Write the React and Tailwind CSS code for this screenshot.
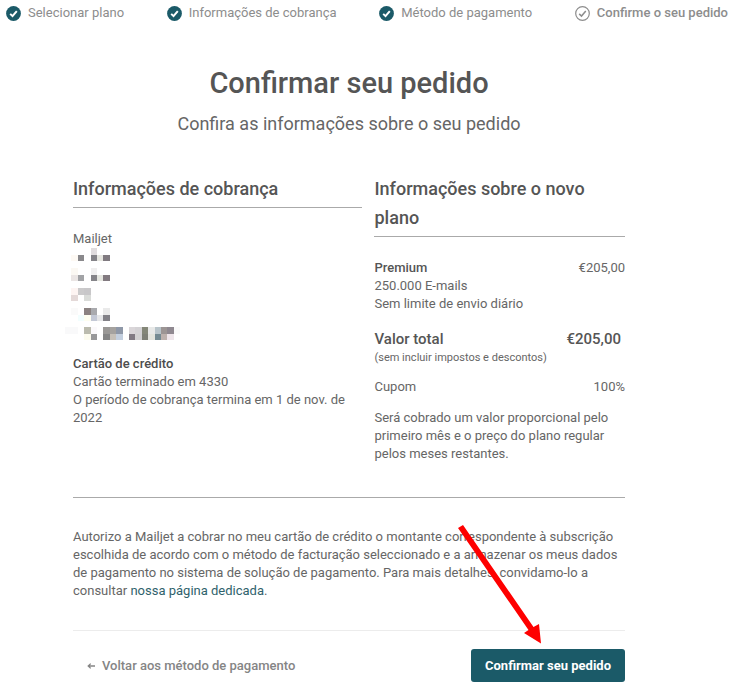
const steps = [
  { label: 'Selecionar plano', done: true },
  { label: 'Informações de cobrança', done: true },
  { label: 'Método de pagamento', done: true },
  { label: 'Confirme o seu pedido', done: false },
];

// [column, row, colour] on a grid of 6.4px squares
const mosaic = [
  { y: 0, cells: [[4, 0, '#e0dcde'], [1, 1, '#fdf9f4'], [2, 1, '#8a898c'], [4, 1, '#848388'], [5, 1, '#e6e6e0'], [6, 1, '#807a80']] },
  { y: 20, cells: [[1, 0, '#fbf8f3'], [4, 0, '#f0efef'], [1, 1, '#eae5e4'], [2, 1, '#a2a3a6'], [4, 1, '#858489'], [5, 1, '#e5e6e0'], [6, 1, '#827a80']] },
  { y: 40, cells: [[1, 0, '#fdf4f2'], [2, 0, '#cbcacb'], [3, 0, '#c8c7c9'], [1, 1, '#e4d9d8'], [3, 1, '#dadcd9']] },
  { y: 60, cells: [[1, 0, '#fafafa'], [3, 0, '#8b8281'], [4, 0, '#a9aaae'], [6, 0, '#eaeaea'], [2, 1, '#f2fefe'], [3, 1, '#fefef0'], [4, 1, '#c4c9d6'], [5, 1, '#e5e6e8'], [6, 1, '#828187']] },
  {
    y: 79,
    cells: [
      [0, 0, '#f9f9fa'], [1, 0, '#f9f9fa'], [3, 0, '#bbbbae'], [4, 0, '#fbf9fb'], [6, 0, '#9a9896'], [7, 0, '#a5a29f'], [8, 0, '#8f98a8'],
      [10, 0, '#dad6d9'], [11, 0, '#d4d2d5'], [12, 0, '#848778'], [13, 0, '#e8e9e8'], [14, 0, '#b8c4ca'], [15, 0, '#9c9594'], [16, 0, '#8f8890'], [17, 0, '#fafafa'],
      [3, 1, '#fcfbee'], [4, 1, '#98989a'], [6, 1, '#858585'], [7, 1, '#c6c0b8'], [8, 1, '#c3cfdf'],
      [10, 1, '#817a83'], [11, 1, '#d2d1d2'], [12, 1, '#7e8076'], [13, 1, '#e3e4dd'], [14, 1, '#748a92'], [15, 1, '#bdb1ad'], [16, 1, '#eee5ea'],
    ],
  },
];

function StepIcon({ done }) {
  return (
    <svg viewBox="0 0 15 15" className="w-[15px] h-[15px] shrink-0" fill="none" aria-hidden="true">
      {done ? (
        <circle cx="7.5" cy="7.5" r="7.4" fill="#1b5a68" />
      ) : (
        <circle cx="7.5" cy="7.5" r="6.8" stroke="#8d8d8d" strokeWidth="1.2" />
      )}
      <path
        d="M4.2 7.9 L6.5 10.1 L10.8 5.1"
        stroke={done ? '#ffffff' : '#8d8d8d'}
        strokeWidth={done ? 2 : 1.5}
      />
    </svg>
  );
}

function HiddenAddress() {
  return (
    <svg viewBox="0 0 116 93" className="w-[116px] h-[93px] -ml-2" shapeRendering="crispEdges" role="img" aria-label="Endereço oculto">
      {mosaic.map((line) =>
        line.cells.map(([col, row, fill]) => (
          <rect key={`${line.y}-${col}-${row}`} x={col * 6.4} y={line.y + row * 6.6} width="6.4" height="6.6" fill={fill} />
        ))
      )}
    </svg>
  );
}

export default function App() {
  return (
    <div className="relative bg-white font-['Roboto',sans-serif] text-[13px] leading-[18px] text-[#666666]">
      <ol className="flex justify-between pl-[6px] pr-[6px] pt-1 text-[#8d8d8d]">
        {steps.map((step) => (
          <li key={step.label} className="flex items-center gap-[7px]" aria-current={step.done ? undefined : 'step'}>
            <StepIcon done={step.done} />
            <span className={step.done ? '' : 'font-medium'}>{step.label}</span>
          </li>
        ))}
      </ol>

      <main className="pl-[73px] pr-[109px]">
        <header className="pt-10 text-center">
          <h1 className="text-[29px] leading-[42px] font-medium text-[#555555]">Confirmar seu pedido</h1>
          <p className="mt-[6px] text-[18px] leading-[28px]">Confira as informações sobre o seu pedido</p>
        </header>

        <div className="mt-9 flex gap-3 border-b border-[#aaaaaa] pb-[34px]">
          <section className="flex-[290_1_0%]">
            <h2 className="border-b border-[#aaaaaa] pb-1 text-[18px] leading-[29px] font-medium text-[#555555]">
              Informações de cobrança
            </h2>
            <p className="mt-[22px]">Mailjet</p>
            <HiddenAddress />
            <h3 className="mt-[14px] font-medium text-[#4d4d4d]">Cartão de crédito</h3>
            <p>Cartão terminado em 4330</p>
            <p>O período de cobrança termina em 1 de nov. de 2022</p>
          </section>

          <section className="flex-[251_1_0%]">
            <h2 className="border-b border-[#aaaaaa] pb-1 text-[18px] leading-[29px] font-medium text-[#555555]">
              Informações sobre o novo plano
            </h2>
            <div className="mt-[22px] flex justify-between">
              <h3 className="font-medium text-[#555555]">Premium</h3>
              <span>€205,00</span>
            </div>
            <p>250.000 E-mails</p>
            <p>Sem limite de envio diário</p>
            <div className="mt-4 flex justify-between pr-1 text-[15px] leading-[20px] font-medium text-[#555555]">
              <span>Valor total</span>
              <span>€205,00</span>
            </div>
            <p className="text-[11px]">(sem incluir impostos e descontos)</p>
            <div className="mt-[11px] flex justify-between">
              <span>Cupom</span>
              <span>100%</span>
            </div>
            <p className="mt-[13px]">
              Será cobrado um valor proporcional pelo primeiro mês e o preço do plano regular pelos meses restantes.
            </p>
          </section>
        </div>

        <p className="mt-[30px]">
          Autorizo a Mailjet a cobrar no meu cartão de crédito o montante correspondente à subscrição escolhida de
          acordo com o método de facturação seleccionado e a armazenar os meus dados de pagamento no sistema de solução
          de pagamento. Para mais detalhes, convidamo-lo a consultar{' '}
          <a href="#dedicada" className="text-[#2f626c]">nossa página dedicada</a>.
        </p>

        <footer className="mt-[30px] flex items-center justify-between border-t border-[#ececec] pt-[18px]">
          <a href="#pagamento" className="ml-[14px] flex items-center gap-[7px] font-medium text-[#858585]">
            <svg viewBox="0 0 8 6" className="w-2 h-[6px]" fill="none" stroke="currentColor" strokeWidth="1.3" aria-hidden="true">
              <path d="M8 3 H1.5 M3.7 0.6 L1.2 3 L3.7 5.4" />
            </svg>
            Voltar aos método de pagamento
          </a>
          <button type="button" className="h-[33px] rounded-[3px] bg-[#1b5a68] px-[14px] font-bold text-white">
            Confirmar seu pedido
          </button>
        </footer>
      </main>

      <svg viewBox="0 0 84 120" className="absolute left-[458px] top-[524px] w-[84px] h-[120px]" fill="#fe0000" aria-hidden="true">
        <path d="M0 4 L5 1 L75.5 103 L81 100 L83 119.5 L66 109 L70.5 106 Z" />
      </svg>
    </div>
  );
}
